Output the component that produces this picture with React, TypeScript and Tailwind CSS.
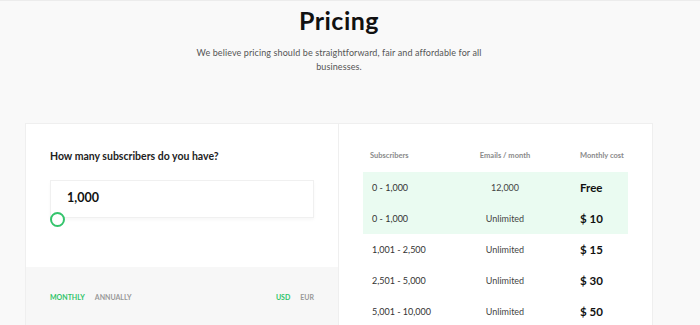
import { useState } from "react";

const tiers = [
  { range: "0 - 1,000", emails: "12,000", cost: "Free", hl: true },
  { range: "0 - 1,000", emails: "Unlimited", cost: "$ 10", hl: true },
  { range: "1,001 - 2,500", emails: "Unlimited", cost: "$ 15", hl: false },
  { range: "2,501 - 5,000", emails: "Unlimited", cost: "$ 30", hl: false },
  { range: "5,001 - 10,000", emails: "Unlimited", cost: "$ 50", hl: false },
];

const font = { fontFamily: "Lato, 'Open Sans', sans-serif" };

export default function App() {
  const [billing, setBilling] = useState<"monthly" | "annually">("monthly");
  const [currency, setCurrency] = useState<"USD" | "EUR">("USD");

  return (
    <div style={font} className="min-h-screen bg-[#f9f9f9] border-t border-[#ececec] text-[#111]">
      <div className="w-[678px]">
        {/* Heading */}
        <h1 className="text-center text-[25px] font-bold leading-none pt-[7px] tracking-[0.5px]">Pricing</h1>
        <p className="mt-[13px] text-center text-[9px] leading-[14px] text-[#555] tracking-[0.1px]">
          We believe pricing should be straightforward, fair and affordable for all
          <br />
          businesses.
        </p>

        {/* Card */}
        <div className="mx-[25px] mt-[49px] flex border border-[#efefef] bg-white">
          {/* Calculator */}
          <div className="w-[313px] border-r border-[#efefef] flex flex-col">
            <div className="px-[24px] pt-[25px] h-[143px]">
              <div className="text-[10.5px] font-bold text-[#222]">How many subscribers do you have?</div>
              <div className="relative mt-[15px]">
                <div className="h-[38px] border border-[#f0f0f0] shadow-[0_2px_3px_rgba(0,0,0,0.03)] flex items-center pl-[16px] text-[12.5px] font-bold">
                  1,000
                </div>
                <div className="absolute left-0 top-[32px] w-[15px] h-[15px] rounded-full border-[2.5px] border-[#34c46c] bg-white" />
              </div>
            </div>
            <div className="bg-[#f7f7f7] h-[60px] px-[24px] flex items-center justify-between text-[7px] font-bold uppercase">
              <div className="flex gap-[10px]">
                <button onClick={() => setBilling("monthly")} className={billing === "monthly" ? "text-[#2fc46a]" : "text-[#999]"}>MONTHLY</button>
                <button onClick={() => setBilling("annually")} className={billing === "annually" ? "text-[#2fc46a]" : "text-[#999]"}>ANNUALLY</button>
              </div>
              <div className="flex gap-[10px]">
                <button onClick={() => setCurrency("USD")} className={currency === "USD" ? "text-[#2fc46a]" : "text-[#999]"}>USD</button>
                <button onClick={() => setCurrency("EUR")} className={currency === "EUR" ? "text-[#2fc46a]" : "text-[#999]"}>EUR</button>
              </div>
            </div>
          </div>

          {/* Table */}
          <div className="flex-1 pl-[24px] pr-[24px] pt-[16px]">
            <div className="grid grid-cols-[96px_92px_77px] h-[32px] items-center text-[7.5px] font-bold text-[#8a8a8a]">
              <div className="pl-[7px]">Subscribers</div>
              <div className="text-center">Emails / month</div>
              <div className="pl-[29px]">Monthly cost</div>
            </div>
            {tiers.map((t, i) => (
              <div key={i} className={`grid grid-cols-[96px_92px_77px] h-[31px] items-center ${t.hl ? "bg-[#eafbf1]" : ""}`}>
                <div className="pl-[9px] text-[9px] text-[#333]">{t.range}</div>
                <div className="text-center text-[9px] text-[#444]">{t.emails}</div>
                <div className="pl-[29px] text-[11.5px] font-bold text-[#111]">{t.cost}</div>
              </div>
            ))}
          </div>
        </div>
      </div>
    </div>
  );
}
